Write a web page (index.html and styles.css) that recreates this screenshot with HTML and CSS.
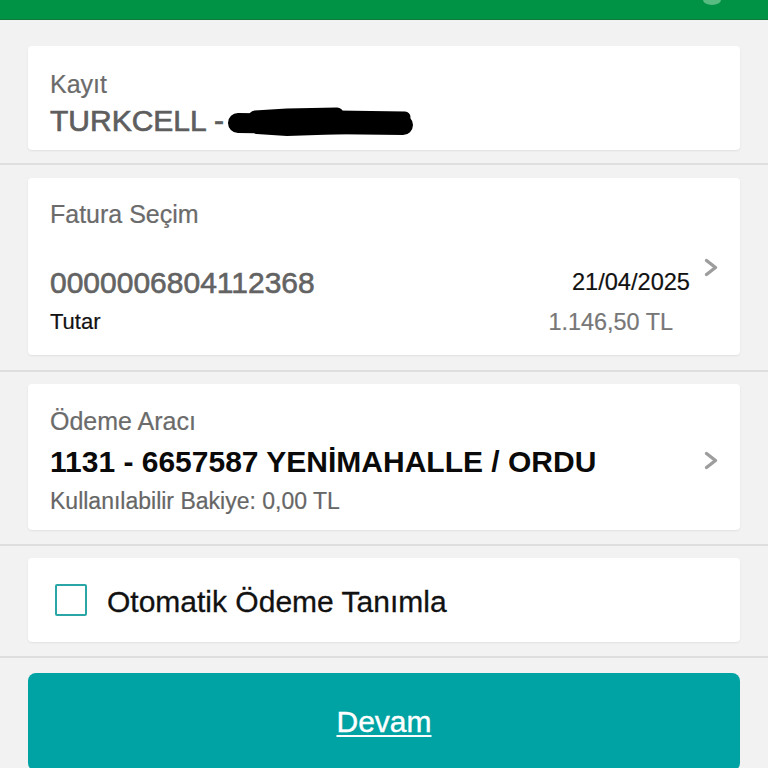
FILE: index.html
```html
<!DOCTYPE html>
<html lang="tr">
<head>
<meta charset="utf-8">
<title>Fatura Ödeme</title>
<link rel="stylesheet" href="styles.css">
</head>
<body>
<header class="topbar">
  <svg class="top-icon" viewBox="0 0 20 8" aria-hidden="true"><ellipse cx="10" cy="0" rx="9" ry="5" fill="#9fdcb5" opacity="0.55"/></svg>
</header>
<main class="page">
  <section class="section s1">
    <div class="card card-kayit">
      <div class="card-body">
        <div class="label">Kayıt</div>
        <div class="value-kayit">TURKCELL - <svg class="redact" viewBox="0 0 186 30" aria-hidden="true">
          <g stroke="#000" stroke-linecap="round" fill="none">
            <path d="M11 17 L176 19" stroke-width="20"/>
            <path d="M28 11 L60 9 L110 8" stroke-width="13"/>
            <path d="M110 10 L178 11" stroke-width="11"/>
            <path d="M30 23 L60 25 L150 22" stroke-width="10"/>
          </g>
        </svg></div>
      </div>
    </div>
  </section>

  <section class="section s2">
    <div class="card card-fatura">
      <div class="card-body">
        <div class="label">Fatura Seçim</div>
        <div class="row row-top">
          <span class="invoice-no">0000006804112368</span>
          <span class="date">21/04/2025</span>
        </div>
        <div class="row row-bottom">
          <span class="tutar">Tutar</span>
          <span class="amount">1.146,50 TL</span>
        </div>
      </div>
      <svg class="chevron" viewBox="0 0 14 18" aria-hidden="true"><path d="M2.5 2 L11.5 9 L2.5 16" fill="none" stroke="#9d9d9d" stroke-width="3.4" stroke-linecap="round" stroke-linejoin="round"/></svg>
    </div>
  </section>

  <section class="section s3">
    <div class="card card-odeme">
      <div class="card-body">
        <div class="label">Ödeme Aracı</div>
        <div class="account">1131 - 6657587 YENİMAHALLE / ORDU</div>
        <div class="balance">Kullanılabilir Bakiye: 0,00 TL</div>
      </div>
      <svg class="chevron" viewBox="0 0 14 18" aria-hidden="true"><path d="M2.5 2 L11.5 9 L2.5 16" fill="none" stroke="#9d9d9d" stroke-width="3.4" stroke-linecap="round" stroke-linejoin="round"/></svg>
    </div>
  </section>

  <section class="section s4">
    <div class="card card-auto">
      <span class="checkbox"></span>
      <span class="auto-text">Otomatik Ödeme Tanımla</span>
    </div>
  </section>

  <section class="s5">
    <div class="btn"><span class="btn-text">Devam</span></div>
  </section>
</main>
</body>
</html>
```

FILE: styles.css
```css
html, body {
  margin: 0;
  padding: 0;
}
body {
  background: #f2f2f2;
  font-family: "Liberation Sans", Arial, Helvetica, sans-serif;
  width: 768px;
  height: 768px;
  overflow: hidden;
}
.topbar {
  height: 19px;
  background: #009245;
  border-bottom: 1px solid #0b7a3b;
  position: relative;
}
.top-icon {
  position: absolute;
  right: 46px;
  top: 0;
  width: 20px;
  height: 8px;
}
.section {
  padding: 12px 28px 14px;
  border-bottom: 2px solid #dedede;
}
.s1 { padding-top: 26px; padding-bottom: 13px; }
.s2 { padding-top: 13px; padding-bottom: 15px; }
.s5 { padding: 15px 28px 0; }

.card {
  background: #fff;
  border-radius: 4px;
  box-shadow: 0 1px 2px rgba(0, 0, 0, 0.08);
  display: flex;
  align-items: center;
}
.card-body {
  flex: 1;
  min-width: 0;
}
.label {
  font-size: 25px;
  line-height: 30px;
  color: #6b6b6b;
  -webkit-text-stroke: 0.2px #6b6b6b;
}

.card-kayit { padding: 23px 22px 12px; }
.value-kayit {
  margin-top: 5px;
  font-size: 30px;
  line-height: 34px;
  color: #5e5e5e;
  -webkit-text-stroke: 0.7px #5e5e5e;
  white-space: nowrap;
}
.redact {
  display: inline-block;
  width: 186px;
  height: 30px;
  vertical-align: -5px;
  margin-left: -5px;
}

.card-fatura { padding: 21px 22px 19px; }
.row {
  display: flex;
  justify-content: space-between;
}
.row-top {
  margin-top: 36px;
  align-items: flex-end;
}
.invoice-no {
  font-size: 30px;
  line-height: 36px;
  color: #636363;
  -webkit-text-stroke: 0.6px #636363;
}
.date {
  font-size: 23.6px;
  line-height: 28px;
  color: #111;
  -webkit-text-stroke: 0.2px #111;
  margin-bottom: 5px;
}
.row-bottom {
  margin-top: 7px;
  align-items: flex-end;
}
.tutar {
  font-size: 22px;
  line-height: 28px;
  color: #111;
  -webkit-text-stroke: 0.2px #111;
}
.amount {
  font-size: 23.4px;
  line-height: 28px;
  color: #777;
  -webkit-text-stroke: 0.2px #777;
  margin-right: 17px;
}
.chevron {
  flex: none;
  width: 14px;
  height: 19px;
  margin-left: 14px;
}

.card-odeme { padding: 22px 22px 15px; }
.account {
  margin-top: 9px;
  font-size: 30px;
  line-height: 34px;
  font-weight: 700;
  color: #0a0a0a;
  white-space: nowrap;
}
.balance {
  margin-top: 8px;
  font-size: 23px;
  line-height: 28px;
  color: #666;
  -webkit-text-stroke: 0.2px #666;
}

.card-auto {
  height: 84px;
  padding: 0 27px;
}
.checkbox {
  flex: none;
  width: 28px;
  height: 28px;
  border: 2px solid #2aa6a6;
  border-radius: 2px;
  margin-right: 20px;
}
.auto-text {
  font-size: 30px;
  line-height: 36px;
  padding-top: 4px;
  color: #111;
  -webkit-text-stroke: 0.3px #111;
}

.btn {
  height: 98px;
  border-radius: 8px;
  background: #00a3a3;
  display: flex;
  align-items: center;
  justify-content: center;
}
.btn-text {
  font-size: 30px;
  line-height: 36px;
  color: #fff;
  -webkit-text-stroke: 0.4px #fff;
  text-decoration: underline;
  text-decoration-thickness: 2px;
  text-underline-offset: 3px;
}
```
